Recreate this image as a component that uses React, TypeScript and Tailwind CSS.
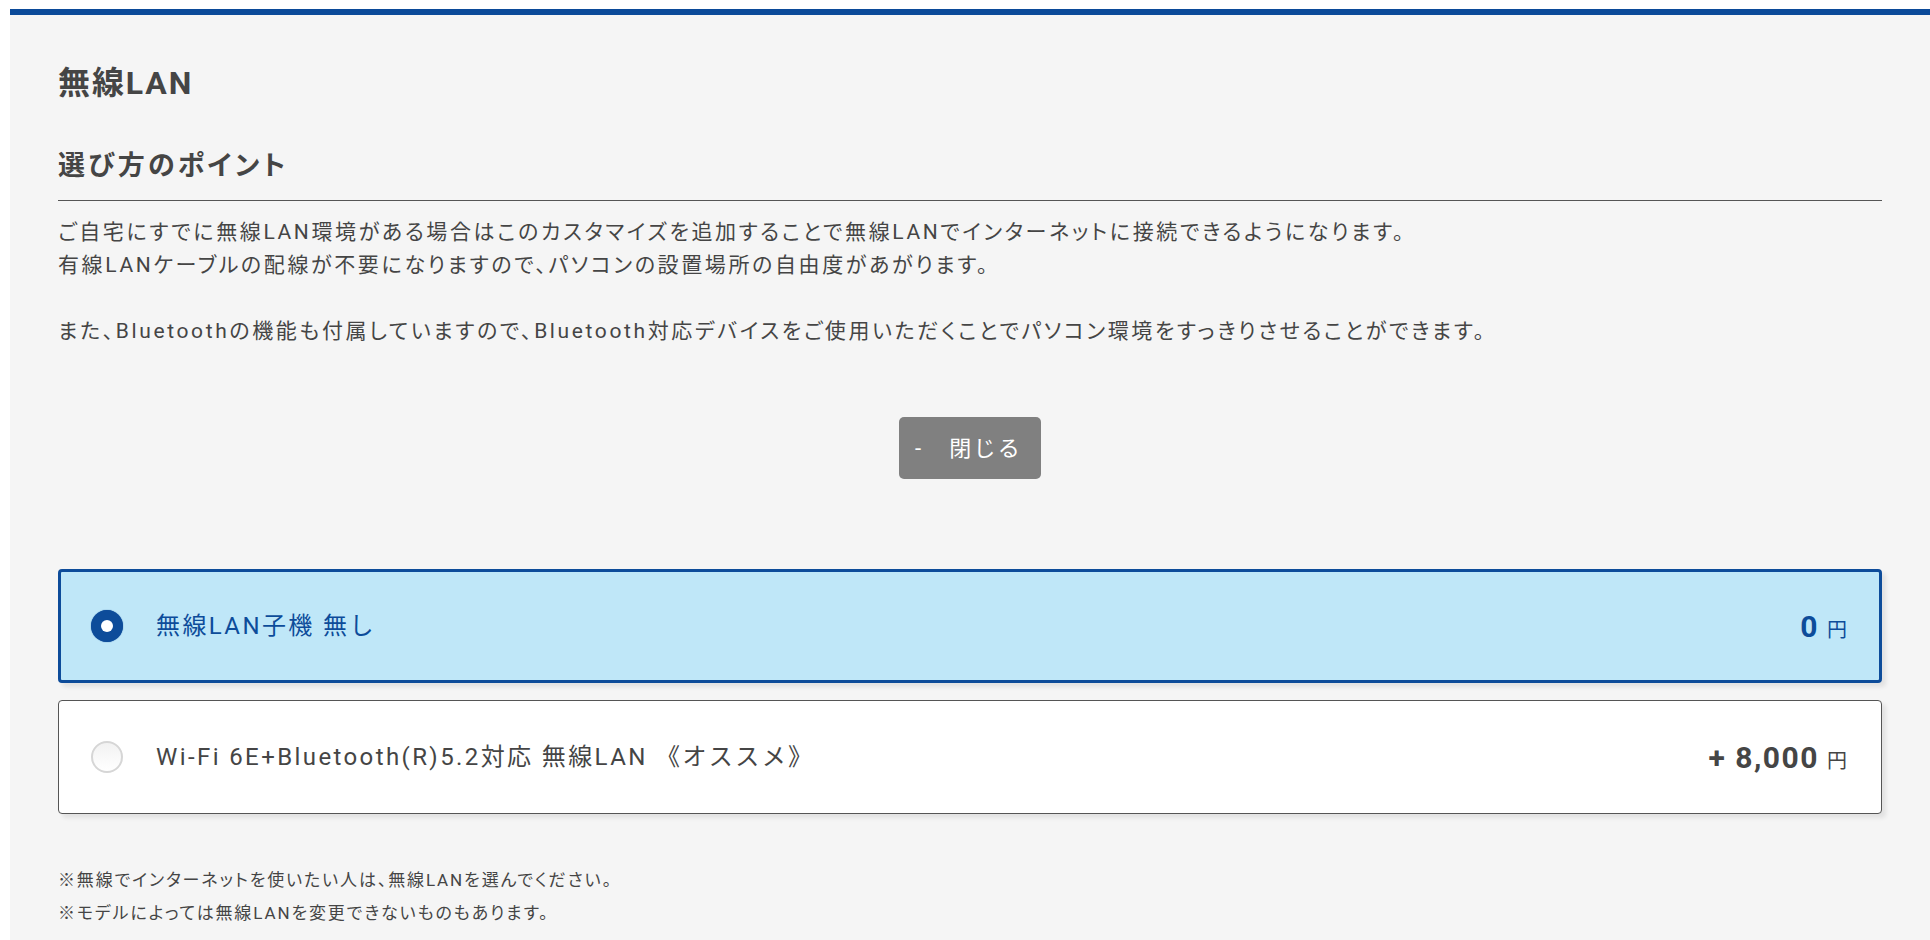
import React from "react";

function Radio({ checked }: { checked: boolean }) {
  if (checked) {
    return (
      <div className="w-[32px] h-[32px] rounded-full bg-[#0d4c9a] flex items-center justify-center shrink-0 shadow-[0_0_1px_#0d4c9a]">
        <div className="w-[12px] h-[12px] rounded-full bg-white" />
      </div>
    );
  }
  return (
    <div className="w-[32px] h-[32px] rounded-full bg-gradient-to-b from-[#f2f2f2] to-white border-[2px] border-[#d6d6d6] shrink-0" />
  );
}

export default function App() {
  return (
    <div className="min-h-screen bg-white pl-[10px] pt-[9px] font-[Roboto,'Noto_Sans_CJK_JP',sans-serif] text-[#454545]">
      <div className="border-t-[6px] border-[#0b4a99] bg-[#f5f5f5] px-12 pt-[48px] pb-[20px]">
        <h1 className="text-[32px] leading-[40px] font-bold tracking-[0.06em]">無線LAN</h1>
        <h2 className="mt-[43px] text-[27px] leading-[40px] font-bold tracking-[0.12em] [font-feature-settings:'palt'] pb-[14px] border-b border-[#555]">
          選び方のポイント
        </h2>
        <div className="mt-[15px] text-[21px] leading-[33px] tracking-[0.125em] [font-feature-settings:'palt']">
          <p>ご自宅にすでに無線LAN環境がある場合はこのカスタマイズを追加することで無線LANでインターネットに接続できるようになります。</p>
          <p>有線LANケーブルの配線が不要になりますので、パソコンの設置場所の自由度があがります。</p>
          <p>&nbsp;</p>
          <p>また、Bluetoothの機能も付属していますので、Bluetooth対応デバイスをご使用いただくことでパソコン環境をすっきりさせることができます。</p>
        </div>
        <div className="mt-[69px] flex justify-center">
          <button className="h-[62px] w-[142px] rounded-[5px] bg-[#808080] text-white text-[22px] tracking-[0.1em] flex items-center pl-[16px] gap-[26px]">
            <span>-</span>
            <span>閉じる</span>
          </button>
        </div>
        <div className="mt-[90px] flex flex-col gap-[17px]">
          <div className="h-[114px] rounded-[4px] border-[3px] border-[#0d4c9a] bg-[#bfe7f8] flex items-center pl-[30px] pr-[32px] shadow-[4px_4px_4px_rgba(0,0,0,0.08)]">
            <Radio checked />
            <span className="ml-[33px] text-[24px] tracking-[0.1em] text-[#0d4c9a]">無線LAN子機 無し</span>
            <div className="ml-auto flex items-baseline text-[#0d4c9a]">
              <span className="text-[30px] font-bold tracking-[0.05em]">0</span>
              <span className="ml-[8px] text-[20px]">円</span>
            </div>
          </div>
          <div className="h-[114px] rounded-[4px] border border-[#555] bg-white flex items-center pl-[32px] pr-[34px] shadow-[4px_4px_4px_rgba(0,0,0,0.08)]">
            <Radio checked={false} />
            <span className="ml-[33px] text-[24px] tracking-[0.1em] text-[#454545]">Wi-Fi 6E+Bluetooth(R)5.2対応 無線LAN 《オススメ》</span>
            <div className="ml-auto flex items-baseline text-[#454545]">
              <span className="text-[30px] font-bold tracking-[0.05em]">+ 8,000</span>
              <span className="ml-[8px] text-[20px]">円</span>
            </div>
          </div>
        </div>
        <div className="mt-[50px] text-[17px] leading-[33px] tracking-[0.11em] [font-feature-settings:'palt']">
          <p>※無線でインターネットを使いたい人は、無線LANを選んでください。</p>
          <p>※モデルによっては無線LANを変更できないものもあります。</p>
        </div>
      </div>
    </div>
  );
}
